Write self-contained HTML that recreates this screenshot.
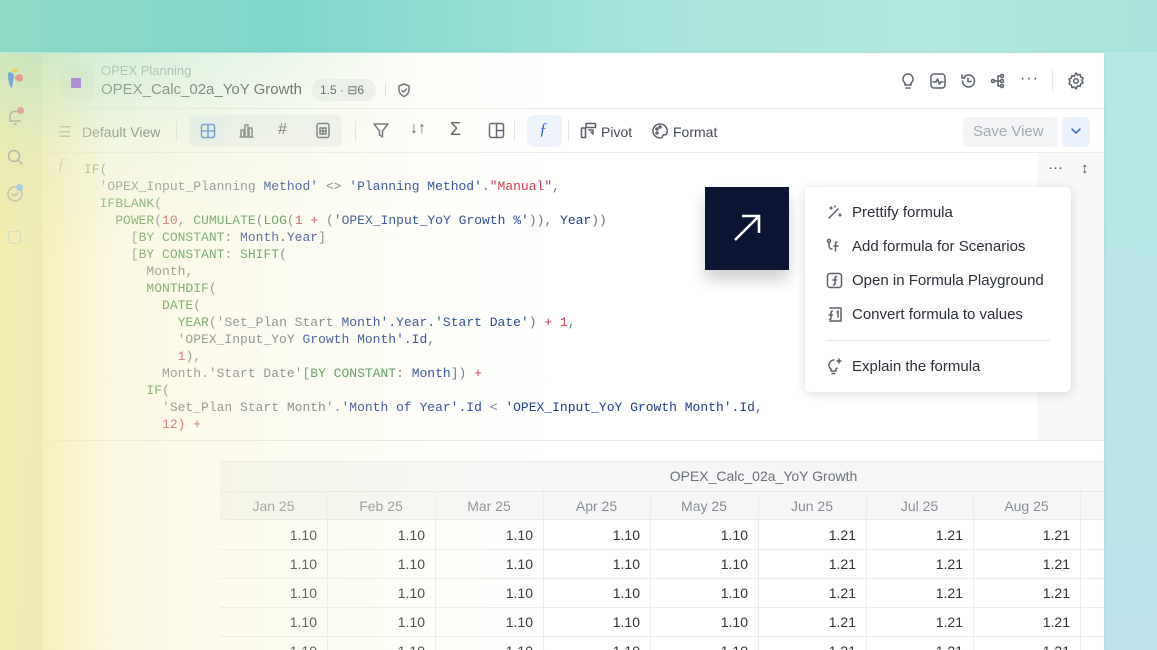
<!DOCTYPE html>
<html><head><meta charset="utf-8"><style>
*{box-sizing:border-box;margin:0;padding:0}
html,body{width:1157px;height:650px;overflow:hidden}
body{position:relative;font-family:"Liberation Sans",sans-serif;
background:linear-gradient(90deg,#8fd9c6 0%,#7fd6cc 25%,#a6e4dc 55%,#b3e8de 80%,#a8e4dc 100%);}
.bgbot{position:absolute;left:0;top:52px;width:1157px;height:598px;background:linear-gradient(180deg,#b8e8e6 0%,#bde4ee 100%)}
.panel{position:absolute;left:42px;top:53px;width:1062px;height:597px;background:#fff;box-shadow:0 0 4px rgba(0,0,0,.08)}
.ov{position:absolute;left:0;top:53px;width:1104px;height:597px;pointer-events:none;
background:linear-gradient(90deg,rgba(246,236,170,.95) 0%,rgba(246,236,175,.85) 4%,rgba(246,240,190,.45) 10%,rgba(246,242,200,.3) 22%,rgba(246,244,215,.15) 38%,rgba(255,255,255,0) 52%)}
.ov2{position:absolute;left:0;top:53px;width:700px;height:200px;pointer-events:none;
background:linear-gradient(180deg,rgba(160,225,205,.45) 0%,rgba(200,235,210,.15) 50%,rgba(255,255,255,0) 100%);
-webkit-mask:linear-gradient(90deg,#000 0%,#000 10%,transparent 60%)}
.abs{position:absolute}
.t{color:#333842}
.code{position:absolute;left:84px;top:161px;font-family:"Liberation Mono",monospace;font-size:13px;line-height:17px;white-space:pre;color:#6b7380;letter-spacing:0}
.f{color:#3e8c46}.b{color:#1e3d8f}.r{color:#c8334e}.g{color:#6b7380}
.hd{position:absolute;color:#888e99;font-size:14px;text-align:center}
.cell{position:absolute;font-size:14px;color:#333;text-align:right}
.mi{position:absolute;left:852px;font-size:15px;color:#2a2f3a}
.ic{position:absolute;stroke:#5a606c;fill:none;stroke-width:1.5;stroke-linecap:round;stroke-linejoin:round}
</style></head><body>
<div class="bgbot"></div>
<div class="panel"></div>
<!-- header -->
<div class="abs" style="left:60px;top:65px;width:34px;height:34px;border-radius:6px;background:#eef0f2"></div>
<div class="abs" style="left:101px;top:63px;font-size:13px;color:#8a909a">OPEX Planning</div>
<div class="abs t" style="left:101px;top:81px;font-size:15px">OPEX_Calc_02a_YoY Growth</div>
<div class="abs" style="left:312px;top:79px;width:64px;height:22px;border-radius:11px;background:#f0f1f3;font-size:12px;color:#444;padding:4px 8px">1.5 · ⊟6</div>
<div class="abs" style="left:385px;top:82px;width:1px;height:15px;background:#ddd"></div>
<svg class="ic" style="left:396px;top:82px" width="16" height="16" viewBox="0 0 16 16"><path d="M8 2 L13 4 V8 C13 11 10.5 13.5 8 14.5 C5.5 13.5 3 11 3 8 V4 Z"/><path d="M6 8.5 L7.5 10 L10.5 7"/></svg>
<!-- right header icons -->
<svg class="ic" style="left:900px;top:72px" width="16" height="18" viewBox="0 0 16 18"><path d="M8 2a5 5 0 0 0-3 9v2h6v-2a5 5 0 0 0-3-9z"/><path d="M6 16h4"/></svg>
<svg class="ic" style="left:929px;top:72px" width="18" height="18" viewBox="0 0 18 18"><rect x="2" y="2" width="14" height="14" rx="3"/><path d="M4 10h3l1.5-3 2 5 1.5-2h2"/></svg>
<svg class="ic" style="left:959px;top:72px" width="18" height="18" viewBox="0 0 18 18"><path d="M3.5 9a6 6 0 1 0 1.8-4.3"/><path d="M3 3v3h3"/><path d="M9 6v3.5h3"/></svg>
<svg class="ic" style="left:989px;top:72px" width="18" height="18" viewBox="0 0 18 18"><circle cx="4" cy="9" r="1.5"/><circle cx="13" cy="4" r="1.5"/><circle cx="13" cy="9" r="1.5"/><circle cx="13" cy="14" r="1.5"/><path d="M5.5 9h6M9 4v10M9 4h2.5M9 14h2.5"/></svg>
<div class="abs" style="left:1020px;top:70px;font-size:16px;color:#555;letter-spacing:1px">···</div>
<div class="abs" style="left:1052px;top:70px;width:1px;height:22px;background:#e6e6e6"></div>
<svg class="ic" style="left:1066px;top:71px" width="20" height="20" viewBox="0 0 20 20"><path d="M10 2l1.6 2 2.5-.6.6 2.5 2.3 1.1-1 2.4 1 2.4-2.3 1.1-.6 2.5-2.5-.6L10 18l-1.6-2-2.5.6-.6-2.5L3 13l1-2.4L3 8.2l2.3-1.1.6-2.5 2.5.6z"/><circle cx="10" cy="10" r="2.3"/></svg>
<div class="abs" style="left:42px;top:108px;width:1062px;height:1px;background:#ececec"></div>
<!-- toolbar -->
<div class="abs" style="left:58px;top:123px;font-size:15px;color:#555">☰</div>
<div class="abs" style="left:82px;top:124px;font-size:14px;color:#444a55">Default View</div>
<div class="abs" style="left:176px;top:121px;width:1px;height:20px;background:#e3e3e3"></div>
<div class="abs" style="left:189px;top:115px;width:153px;height:32px;border-radius:6px;background:#f2f3f5"></div>
<div class="abs" style="left:191px;top:117px;width:34px;height:28px;border-radius:5px;background:#e8f0fb"></div>
<svg class="ic" style="left:200px;top:123px;stroke:#2f6bd8" width="16" height="16" viewBox="0 0 16 16"><rect x="1.5" y="1.5" width="13" height="13" rx="2"/><path d="M8 1.5v13M1.5 8h13"/></svg>
<svg class="ic" style="left:238px;top:122px" width="17" height="17" viewBox="0 0 17 17"><path d="M2 15h13M3 15V8h3v7M7 15V3h3v12M11 15V6h3v9"/></svg>
<div class="abs" style="left:278px;top:121px;font-size:16px;color:#555">#</div>
<svg class="ic" style="left:315px;top:122px" width="16" height="17" viewBox="0 0 16 17"><rect x="2" y="1.5" width="12" height="14" rx="2"/><rect x="5" y="6" width="6" height="6"/><path d="M8 6v6M5 9h6"/></svg>
<div class="abs" style="left:355px;top:121px;width:1px;height:20px;background:#e3e3e3"></div>
<svg class="ic" style="left:372px;top:122px" width="18" height="17" viewBox="0 0 18 17"><path d="M2 2h14l-5.5 7v6l-3-2V9z"/></svg>
<div class="abs" style="left:410px;top:120px;font-size:16px;color:#555">↓↑</div>
<div class="abs" style="left:450px;top:119px;font-size:18px;color:#555">Σ</div>
<svg class="ic" style="left:488px;top:122px" width="17" height="17" viewBox="0 0 17 17"><rect x="1.5" y="1.5" width="14" height="14" rx="2"/><path d="M8.5 1.5v14M8.5 8.5h7"/></svg>
<div class="abs" style="left:514px;top:121px;width:1px;height:20px;background:#e3e3e3"></div>
<div class="abs" style="left:527px;top:115px;width:35px;height:32px;border-radius:6px;background:#eef3fc"></div>
<div class="abs" style="left:539px;top:119px;font-size:17px;color:#2f5fd0;font-style:italic;font-family:'Liberation Serif',serif">ƒ</div>
<div class="abs" style="left:568px;top:121px;width:1px;height:20px;background:#e3e3e3"></div>
<svg class="ic" style="left:580px;top:122px" width="17" height="17" viewBox="0 0 17 17"><rect x="1.5" y="6" width="4" height="9.5"/><rect x="6" y="1.5" width="9.5" height="4"/><path d="M9 8h4v4M13 12l-2-2"/></svg>
<div class="abs" style="left:601px;top:124px;font-size:14px;color:#444a55">Pivot</div>
<svg class="ic" style="left:651px;top:122px" width="18" height="18" viewBox="0 0 18 18"><path d="M9 2a7 7 0 1 0 2 13.7c1-.5.2-2 1-2.6s3 .3 3.6-1.3A7 7 0 0 0 9 2z"/><circle cx="6" cy="7" r="1"/><circle cx="9" cy="5" r="1"/><circle cx="6" cy="11" r="1"/></svg>
<div class="abs" style="left:673px;top:124px;font-size:14px;color:#444a55">Format</div>
<div class="abs" style="left:963px;top:117px;width:95px;height:30px;border-radius:5px;background:#f3f4f6;font-size:15px;color:#a5aab2;padding:6px 0 0 10px">Save View</div>
<div class="abs" style="left:1062px;top:117px;width:28px;height:30px;border-radius:5px;background:#eaf1fb"></div>
<svg class="ic" style="left:1069px;top:126px;stroke:#2f5fd0" width="14" height="10" viewBox="0 0 14 10"><path d="M3 3l4 4 4-4"/></svg>
<div class="abs" style="left:42px;top:152px;width:1062px;height:1px;background:#ececec"></div>
<!-- formula area -->
<div class="abs" style="left:1038px;top:153px;width:66px;height:287px;background:#f7f8f9"></div>
<div class="abs" style="left:1048px;top:159px;font-size:15px;color:#555">···</div>
<div class="abs" style="left:1081px;top:160px;font-size:15px;color:#555">↕</div>
<div class="abs" style="left:57px;top:155px;font-size:17px;color:#888;font-style:italic;font-family:'Liberation Serif',serif">ƒ</div>
<div class="code"><span class="f">IF</span>(
  <span class="g">'OPEX_Input_Planning</span> <span class="b">Method'</span> &lt;&gt; <span class="b">'Planning Method'</span>.<span class="r">"Manual"</span>,
  <span class="f">IFBLANK</span>(
    <span class="f">POWER</span>(<span class="r">10</span>, <span class="f">CUMULATE</span>(<span class="f">LOG</span>(<span class="r">1</span> <span class="r">+</span> (<span class="b">'OPEX_Input_YoY Growth %'</span>)), <span class="b">Year</span>))
      [<span class="f">BY CONSTANT</span>: <span class="b">Month.Year</span>]
      [<span class="f">BY CONSTANT</span>: <span class="f">SHIFT</span>(
        <span class="g">Month</span>,
        <span class="f">MONTHDIF</span>(
          <span class="f">DATE</span>(
            <span class="f">YEAR</span>(<span class="g">'Set_Plan Start</span> <span class="b">Month'.Year.'Start Date'</span>) <span class="r">+ 1</span>,
            <span class="g">'OPEX_Input_YoY</span> <span class="b">Growth Month'.Id</span>,
            <span class="r">1</span>),
          <span class="g">Month.'Start Date'</span>[<span class="f">BY CONSTANT</span>: <span class="b">Month</span>]) <span class="r">+</span>
        <span class="f">IF</span>(
          <span class="g">'Set_Plan Start Month'</span>.<span class="b">'Month of Year'.Id</span> &lt; <span class="b">'OPEX_Input_YoY Growth Month'.Id</span>,
          <span class="r">12) +</span></div>
<div class="abs" style="left:42px;top:440px;width:1062px;height:1px;background:#e6e6e6"></div>
<!-- table -->
<div class="abs" style="left:220px;top:461px;width:884px;height:30px;background:#f6f6f7;border-top:1px solid #ececec"></div>
<div class="hd" style="left:220px;top:468px;width:1087px;text-align:center;color:#6b717c">OPEX_Calc_02a_YoY Growth</div>
<div class="abs" style="left:220px;top:491px;width:884px;height:29px;background:#f6f6f7;border-top:1px solid #e8e8e8;border-bottom:1px solid #e8e8e8"></div>
<div id="tb"></div>
<!-- dark square -->
<div class="abs" style="left:705px;top:187px;width:84px;height:83px;background:#0c1533;box-shadow:0 10px 14px rgba(0,0,0,.18)"></div>
<svg class="abs" style="left:730px;top:211px" width="34" height="34" viewBox="0 0 34 34"><path d="M5 29L29 5M12 5h17v17" stroke="#fff" stroke-width="2.6" fill="none"/></svg>
<!-- menu -->
<div class="abs" style="left:805px;top:187px;width:266px;height:205px;background:#fff;border-radius:6px;box-shadow:0 2px 10px rgba(0,0,0,.14)"></div>
<div class="mi" style="top:204px">Prettify formula</div>
<div class="mi" style="top:238px">Add formula for Scenarios</div>
<div class="mi" style="top:272px">Open in Formula Playground</div>
<div class="mi" style="top:306px">Convert formula to values</div>
<div class="abs" style="left:826px;top:340px;width:224px;height:1px;background:#e6e6e6"></div>
<div class="mi" style="top:358px">Explain the formula</div>
<svg class="ic" style="left:826px;top:204px" width="17" height="17" viewBox="0 0 17 17"><path d="M3 14L12 5"/><path d="M4 4h2M5 3v2M13 11h2M14 10v2M9 2v1" /></svg>
<svg class="ic" style="left:826px;top:238px" width="17" height="17" viewBox="0 0 17 17"><circle cx="3" cy="3" r="1.5"/><path d="M3 5v3a3 3 0 0 0 3 3"/><path d="M11 4c-1 0-1.5.5-1.5 2v7M8 8h4"/></svg>
<svg class="ic" style="left:826px;top:272px" width="17" height="17" viewBox="0 0 17 17"><rect x="1.5" y="1.5" width="14" height="14" rx="2.5"/><path d="M10.5 4.5c-1 0-1.5.5-1.5 2v5c0 1-.5 1.5-1.5 1.5M7 8h3.5"/></svg>
<svg class="ic" style="left:826px;top:306px" width="17" height="17" viewBox="0 0 17 17"><path d="M4 2h11v13H4"/><path d="M6.5 5c-1 0-1.5.5-1.5 2v5c0 1-.5 1.5-1.5 1.5M3 9h3.5M11 6l1-1v6"/></svg>
<svg class="ic" style="left:826px;top:357px" width="17" height="18" viewBox="0 0 17 18"><path d="M8 3a5 5 0 0 0-3 9v2h5v-2a5 5 0 0 0 1-1"/><path d="M6 16.5h3M13 2v4M11 4h4"/></svg>
<div class="ov"></div>
<div class="ov2"></div>
<div class="abs" style="left:71px;top:78px;width:10px;height:10px;background:#a67fd8;border-radius:1px;opacity:.85"></div>
<!-- sidebar -->
<svg class="abs" style="left:5px;top:68px" width="20" height="22" viewBox="0 0 20 22"><path d="M3 6c0-3 5-2 6 2L7 20C4 18 3 12 3 6z" fill="#74a8e0"/><path d="M10 9c2-4 8-4 8 1s-5 4-8 1z" fill="#e79a9a"/><path d="M6 3c1-3 7-3 7 0-2 2-5 2-7 0z" fill="#e6d36a"/></svg>
<svg class="ic" style="left:6px;top:108px;stroke:#b7b7a0" width="18" height="18" viewBox="0 0 18 18"><path d="M4 13V8a5 5 0 0 1 6-4.5M4 13h10M8 16h2"/></svg>
<div class="abs" style="left:17px;top:107px;width:7px;height:7px;border-radius:50%;background:#e2a4a0"></div>
<svg class="ic" style="left:6px;top:148px;stroke:#b5b8a8" width="18" height="18" viewBox="0 0 18 18"><circle cx="8" cy="8" r="5.5"/><path d="M12 12l4 4"/></svg>
<svg class="ic" style="left:6px;top:185px;stroke:#c6c6b0" width="18" height="18" viewBox="0 0 18 18"><circle cx="9" cy="9" r="7"/><path d="M6 9l2 2 4-3"/></svg>
<div class="abs" style="left:16px;top:184px;width:7px;height:7px;border-radius:50%;background:#a9cde3"></div>
<div class="abs" style="left:8px;top:231px;width:13px;height:13px;border-radius:3px;border:1.5px solid #d2ddc8"></div>
<script>
var cols=[220,327,435,543,650,758,866,973,1080];
var months=["Jan 25","Feb 25","Mar 25","Apr 25","May 25","Jun 25","Jul 25","Aug 25"];
var h="";
for(var i=0;i<8;i++){
 h+='<div class="hd" style="left:'+cols[i]+'px;top:498px;width:'+(cols[i+1]-cols[i])+'px">'+months[i]+'</div>';
 h+='<div class="abs" style="left:'+cols[i+1]+'px;top:491px;width:1px;height:159px;background:#ececec"></div>';
 for(var r=0;r<5;r++){
  var y=520+r*29;
  h+='<div class="cell" style="left:'+cols[i]+'px;top:'+(y+7)+'px;width:'+(cols[i+1]-cols[i]-10)+'px">'+(i<5?"1.10":"1.21")+'</div>';
 }
}
for(var r=1;r<5;r++){h+='<div class="abs" style="left:220px;top:'+(520+r*29)+'px;width:884px;height:1px;background:#ececec"></div>';}
document.getElementById("tb").innerHTML=h;
</script>
</body></html>
